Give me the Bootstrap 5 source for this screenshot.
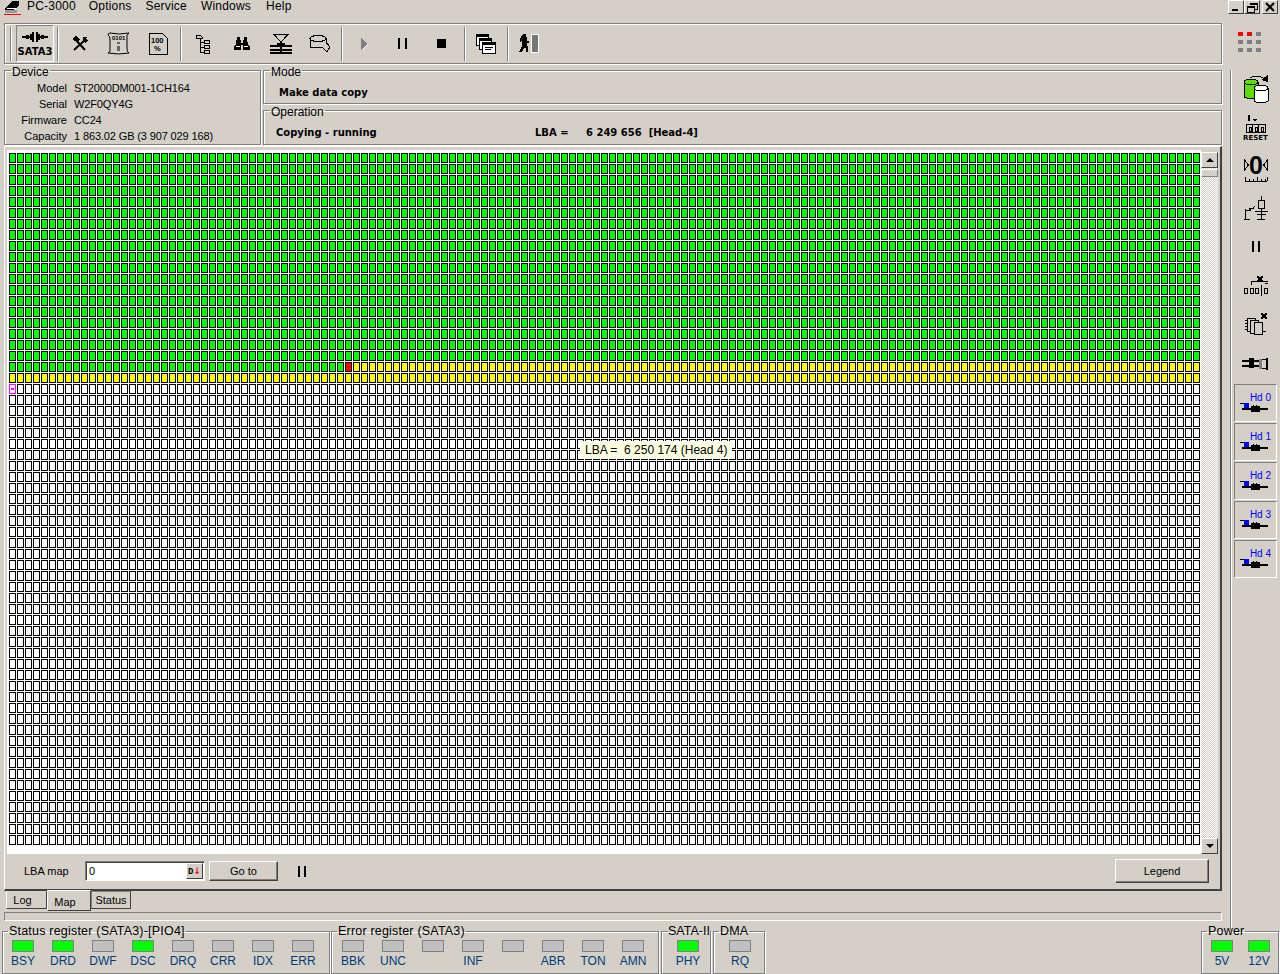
<!DOCTYPE html>
<html lang="en">
<head>
  <meta charset="UTF-8">
  <title>PC-3000</title>
  <link href="https://cdn.jsdelivr.net/npm/bootstrap@5.3.0/dist/css/bootstrap.min.css" rel="stylesheet">
  <style>
    body { background: #d4d0c8; color: #000; font: 11px/14px "Liberation Sans", Arial, sans-serif; overflow: hidden; }
    .pc-app { width: 1280px; height: 974px; overflow: hidden; }
    .pc-etched { border: 1px solid #808080; box-shadow: 1px 1px 0 #fff, inset 1px 1px 0 #fff; }

    .pc-menubar { height: 23px; font-size: 12px; letter-spacing: .2px; }
    .pc-logo { width: 17px; margin: 0 6px 0 4px; height: 15px; border-bottom: 1px solid #f00; }
    .pc-menu { margin-right: 14px; line-height: 13px; }
    .pc-winbtn { width: 16px; height: 14px; background: #d4d0c8; border: 1px solid; border-color: #fff #404040 #404040 #fff; }

    .pc-work { height: 907px; }
    .pc-left { width: 1218px; margin-left: 4px; }
    .pc-toolbar { height: 41px; padding-left: 5px; }
    .pc-tbsep { width: 2px; height: 34px; background: #808080; border-right: 1px solid #fff; margin: 0 1px 0 3px; flex: none; }
    .pc-tbsep.first { margin: 0 4px 0 0; }
    .pc-tbbtn { width: 39px; height: 37px; flex: none; }
    .pc-tbbtn.active { width: 38px; border: 1px solid; border-color: #808080 #fff #fff #808080; font: bold 10px/10px "DejaVu Sans", sans-serif; }
    .pc-ico { shape-rendering: crispEdges; display: block; }
    .pc-ico text { font-family: "Liberation Sans", sans-serif; shape-rendering: auto; }

    fieldset.pc-group { border: 1px solid #808080; box-shadow: 1px 1px 0 #fff, inset 1px 1px 0 #fff; min-width: 0; }
    fieldset.pc-group legend { font-size: 12px; line-height: 12px; margin: 0 0 0 6px; padding: 4px 1px 0; white-space: nowrap; }
    .pc-inforow { margin-top: -2px; gap: 2px; }
    .pc-device { width: 257px; height: 83px; }
    .pc-devrow { height: 16px; line-height: 16px; }
    .pc-devrow span:first-child { width: 63px; text-align: right; margin-right: 7px; margin-left: -1px; }
    .pc-devrow span:last-child { letter-spacing: -.13px; }
    .pc-mode { height: 42px; }
    .pc-oper { height: 43px; margin-top: -2px; }
    .pc-strong { font: bold 10px/16px "DejaVu Sans", sans-serif; padding-top: 7px; }

    .pc-panel { height: 745px; margin-top: 1px; border: 1px solid; border-color: #fff #404040 #404040 #fff; border-width: 1px 2px 2px 1px; padding: 3px 0 0 2px; }
    .pc-mapwhite { width: 1194px; height: 704px; background: #fff; padding: 3px 0 0 2px; position: relative; }
    .pc-cells { display: grid; grid-template-columns: repeat(149, 8px); grid-auto-rows: 11px; }
    .pc-cell { border: 1px solid #000; background: #fff; margin: 0 1px 1px 0; }
    .pc-cell.g { background: #0f0; }
    .pc-cell.y { background: #ff0; }
    .pc-cell.r { background: #f00; }
    .pc-cell.m { border-color: #f0f; background: linear-gradient(#f0f, #f0f) center / 3px 2px no-repeat, #fff; }
    .pc-tip { position: absolute; left: 574px; top: 292px; width: 150px; height: 16px; background: #ffffe1; outline: 1px solid #fff; font-size: 12px; line-height: 16px; padding-left: 4px; white-space: nowrap; }
    .pc-scroll { width: 17px; height: 702px; margin-top: 2px; background: repeating-conic-gradient(#fff 0 25%, #d4d0c8 0 50%) 0 0 / 2px 2px; }
    .pc-sbtn { height: 16px; background: #d4d0c8; border: 1px solid; border-color: #fff #404040 #404040 #fff; }
    .pc-sthumb { height: 8px; background: #d4d0c8; border: 1px solid; border-color: #fff #808080 #808080 #fff; margin-top: 1px; }
    .pc-arrow-up { width: 0; height: 0; border: 4px solid transparent; border-top: 0; border-bottom: 4px solid #000; }
    .pc-arrow-dn { width: 0; height: 0; border: 4px solid transparent; border-bottom: 0; border-top: 4px solid #000; }
    .pc-controls { height: 34px; }
    .pc-lbalabel { width: 78px; padding-left: 17px; }
    .pc-lbainput { width: 120px; height: 20px; background: #fff; border: 1px solid; border-color: #808080 #fff #fff #808080; box-shadow: inset 1px 1px 0 #404040; padding-left: 3px; line-height: 18px; }
    .pc-dbtn { width: 17px; height: 16px; margin: 1px 1px 0 0; background: #d4d0c8; font: bold 9px/14px "Liberation Mono", monospace; border: 1px solid; border-color: #fff #404040 #404040 #fff; }
    .pc-dbtn i { color: #f00; font-style: normal; font-family: "DejaVu Sans", sans-serif; }
    .pc-btn { background: #d4d0c8; border: 1px solid; border-color: #fff #404040 #404040 #fff; box-shadow: inset -1px -1px 0 #808080; text-align: center; }
    .pc-goto { width: 69px; height: 20px; margin-left: 4px; line-height: 18px; }
    .pc-legendbtn { width: 94px; height: 24px; margin-right: 11px; line-height: 22px; }
    .pc-pausebars { width: 8px; height: 11px; margin-left: 20px; border-left: 2px solid #000; border-right: 2px solid #000; }

    .pc-tabs { height: 21px; padding-left: 2px; }
    .pc-tab { height: 18px; border: 1px solid; border-color: transparent #404040 #404040 #fff; line-height: 16px; text-align: center; }
    .pc-tab.log { width: 41px; padding-right: 8px; }
    .pc-tab.map { width: 44px; height: 21px; border-color: #fff #404040 #404040 #fff; line-height: 22px; margin-top: -1px; background: #d4d0c8; padding-right: 8px; }
    .pc-tab.status { width: 40px; border-color: #808080 #404040 #404040 #808080; }
    .pc-thinbox { height: 9px; border: 1px solid; border-color: #808080 #fff #fff #808080; }

    .pc-side { width: 50px; margin-left: 8px; }
    .pc-dots { height: 47px; padding: 9px 0 0 8px; display: grid; grid-template-columns: repeat(3, 5px); grid-auto-rows: 4px; column-gap: 4px; row-gap: 4px; }
    .pc-dots b { background: #808080; }
    .pc-dots b.on { background: #f00; }
    .pc-sidebody { height: 860px; border-left: 1px solid #808080; box-shadow: inset 1px 0 0 #fff; padding-left: 3px; }
    .pc-sideico { width: 43px; height: 39px; }
    .pc-hd { width: 43px; height: 38px; margin-bottom: 1px; border: 1px solid; border-color: #808080 #fff #fff #808080; color: #00f; font-size: 10px; line-height: 11px; text-align: right; padding: 7px 5px 0 0; }
    .pc-hd svg { margin: 0 0 0 5px; }

    .pc-bottom { margin-top: -5px; height: 49px; padding-left: 2px; }
    .pc-bottom fieldset.pc-group { height: 49px; flex: none; }
    .pc-bottom fieldset.pc-group legend { margin-left: 5px; padding: 0 1px; font-size: 12.5px; letter-spacing: .2px; }
    .pc-leds { padding-left: 9px; margin-top: 3px; }
    .pc-led { width: 40px; flex: none; font-size: 12px; line-height: 14px; color: #003c78; }
    .pc-led i { display: block; width: 22px; height: 12px; margin-bottom: 2px; background: #c0c0c0; border: 1px solid #808080; }
    .pc-led span { width: 22px; white-space: nowrap; display: flex; justify-content: center; }
    .pc-led.on i { background: #0f0; }
    .pc-st { width: 328px; }
    .pc-er { width: 328px; margin-left: 1px; }
    .pc-er .pc-leds { padding-left: 10px; }
    .pc-sa { width: 50px; margin-left: 2px; }
    .pc-dm { width: 52px; margin-left: 2px; }
    .pc-sa .pc-leds, .pc-dm .pc-leds { padding-left: 15px; }
    .pc-bottom fieldset.pc-sa legend { margin-left: 6px; padding: 0; letter-spacing: 0; }
    .pc-pw { width: 78px; background: #d4d0c8; }
    .pc-pw .pc-led { width: 37px; }
  </style>
</head>
<body>
<div class="pc-app d-flex flex-column">

  <!-- menu bar -->
  <div class="pc-menubar d-flex">
    <div class="pc-logo">
      <svg class="pc-ico" width="16" height="14" viewBox="0 0 16 14"><path d="M1 8 9 1h6v5l-6 4H1z" fill="#000"/><path d="M1 10h12v3H1z" fill="#999"/><path d="M3 8h9v1H3z" fill="#fff"/></svg>
    </div>
    <span class="pc-menu" style="margin-right:13px">PC-3000</span>
    <span class="pc-menu">Options</span>
    <span class="pc-menu">Service</span>
    <span class="pc-menu" style="margin-right:15px">Windows</span>
    <span class="pc-menu">Help</span>
    <div class="ms-auto d-flex" style="margin-right:2px">
      <div class="pc-winbtn"><svg class="pc-ico" width="14" height="12"><path d="M3 8h6v2H3z"/></svg></div>
      <div class="pc-winbtn"><svg class="pc-ico" width="14" height="12"><path d="M5 2h7v6h-2M5 2v2M5 3h7M2 5h7v6H2zM2 6h7" fill="none" stroke="#000"/></svg></div>
      <div class="pc-winbtn" style="margin-left:2px"><svg class="pc-ico" width="14" height="12"><path d="M3 2l8 8M11 2l-8 8" stroke="#000" stroke-width="2" style="shape-rendering:auto"/></svg></div>
    </div>
  </div>

  <div class="pc-work d-flex">
    <div class="pc-left">
      <!-- toolbar -->
      <div class="pc-toolbar pc-etched d-flex align-items-center">
        <div class="pc-tbsep first"></div>
        <div class="pc-tbbtn active d-flex flex-column align-items-center justify-content-center">
          <svg class="pc-ico mb-1" width="26" height="12" viewBox="0 0 26 12"><path d="M0 5h26v2H0zM4 4h3v4H4zM19 4h3v4h-3zM10 1h2v10h-2zM14 1h2v10h-2zM8 3h10v6H8z" fill="#000"/><path d="M12 1h2v10h-2z" fill="#d4d0c8"/></svg>
          SATA3
        </div>
        <div class="pc-tbsep"></div>
        <div class="pc-tbbtn d-flex align-items-center justify-content-center">
          <svg class="pc-ico" width="18" height="16" viewBox="0 0 18 16"><path d="M3 14 14 4M4 3l10 11" stroke="#000" stroke-width="2" style="shape-rendering:auto"/><path d="M1 3 5 0l4 3-3 3zM12 1h4l-2 2 3 1-2 3-3-2z" fill="#000"/></svg>
        </div>
        <div class="pc-tbbtn d-flex align-items-center justify-content-center">
          <svg class="pc-ico" width="23" height="23" viewBox="0 0 23 23" style="shape-rendering:auto"><path d="M3 1q9 2 19 0q-3 2-2 5v11q0 3 2 4q-10 2-21 0q3-1 2-4V7q0-3-2-4q0-2 2-2z" fill="#d4d0c8" stroke="#000"/><text x="5" y="8" font-size="6" font-weight="bold">0101</text><path d="M10 10h3v2h-3zM10 14h3v5h-3z" fill="#666"/></svg>
        </div>
        <div class="pc-tbbtn d-flex align-items-center justify-content-center">
          <svg class="pc-ico" width="20" height="23" viewBox="0 0 20 23"><path d="M1 1h13l5 5v16H1z" fill="#d4d0c8" stroke="#000"/><text x="3" y="11" font-size="7.500" font-weight="bold">100</text><text x="6" y="19" font-size="7.500" font-weight="bold">%</text></svg>
        </div>
        <div class="pc-tbsep"></div>
        <div class="pc-tbbtn d-flex align-items-center justify-content-center">
          <svg class="pc-ico" width="16" height="20" viewBox="0 0 16 20"><path d="M1 1h4l2 2v1H1z" fill="#d4d0c8" stroke="#000"/><path d="M5 4v14h4M5 8h4M5 13h4" fill="none" stroke="#000"/><path d="M9.500 6.500h5v3h-5zM9.500 11.500h5v3h-5zM9.500 16.500h5v3h-5z" fill="#d4d0c8" stroke="#000"/></svg>
        </div>
        <div class="pc-tbbtn d-flex align-items-center justify-content-center">
          <svg class="pc-ico" width="16" height="13" viewBox="0 0 16 13"><path d="M3 0h3v3h1v3h2V3h1V0h3v3l1 4 2 3v3H9V8H7v5H0v-3l2-3z" fill="#000"/><path d="M2 9h4v1H2zM10 9h4v1h-4z" fill="#fff"/></svg>
        </div>
        <div class="pc-tbbtn d-flex align-items-center justify-content-center">
          <svg class="pc-ico" width="22" height="21" viewBox="0 0 22 21"><path d="M4 1.500h14L11 9z" fill="none" stroke="#000"/><path d="M0 12h22v2H0zM0 16h22v2H0zM0 19h22v2H0zM10 9h2v12h-2zM7 10h8v2H7z" fill="#000"/></svg>
        </div>
        <div class="pc-tbbtn d-flex align-items-center justify-content-center">
          <svg class="pc-ico" width="22" height="18" viewBox="0 0 22 18"><path d="M1 3v9h12l5 5 3-5-3-4h-1V3" fill="#d4d0c8" stroke="#000"/><ellipse cx="9" cy="3.500" rx="8" ry="3" fill="#d4d0c8" stroke="#000"/></svg>
        </div>
        <div class="pc-tbsep" style="margin-left:2px"></div>
        <div class="pc-tbbtn d-flex align-items-center justify-content-center">
          <svg class="pc-ico" width="8" height="12" viewBox="0 0 8 12"><path d="M1 0l6 6-6 6z" fill="#808080"/><path d="M7 6l-6 6h2l5-6z" fill="#fff"/></svg>
        </div>
        <div class="pc-tbbtn d-flex align-items-center justify-content-center">
          <svg class="pc-ico" width="9" height="11"><path d="M0 0h2v11H0zM7 0h2v11H7z"/></svg>
        </div>
        <div class="pc-tbbtn d-flex align-items-center justify-content-center">
          <svg class="pc-ico" width="9" height="9"><path d="M0 0h9v9H0z"/></svg>
        </div>
        <div class="pc-tbsep" style="margin-right:0"></div>
        <div class="pc-tbbtn d-flex align-items-center justify-content-center">
          <svg class="pc-ico" width="20" height="20" viewBox="0 0 20 20"><g fill="#fff" stroke="#000"><path d="M.5.500h12v11H.5z"/><path d="M3.500 4.500h12v11h-12z"/><path d="M6.500 8.500h13v11h-13z"/></g><path d="M0 0h13v3H0zM3 4h13v3H3zM6 8h14v3H6zM9 13h8v1H9zM9 15h6v1H9z" fill="#000"/></svg>
        </div>
        <div class="pc-tbsep" style="margin:0 0 0 2px"></div>
        <div class="pc-tbbtn d-flex align-items-center justify-content-center">
          <svg class="pc-ico" width="20" height="19" viewBox="0 0 20 19"><path d="M4 0h3v3h1v4h2v2H8v3l1 1v5H7v-4H5l-2 4H0l3-6V6l-2 2V5z" fill="#000"/><path d="M12.500.500h7v18h-7z" fill="#777" stroke="#fff"/></svg>
        </div>
      </div>

      <!-- device info -->
      <div class="pc-inforow d-flex">
        <fieldset class="pc-group pc-device flex-none">
          <legend class="float-none w-auto">Device</legend>
          <div style="padding-top:2px">
            <div class="pc-devrow d-flex"><span>Model</span><span>ST2000DM001-1CH164</span></div>
            <div class="pc-devrow d-flex"><span>Serial</span><span>W2F0QY4G</span></div>
            <div class="pc-devrow d-flex"><span>Firmware</span><span>CC24</span></div>
            <div class="pc-devrow d-flex"><span>Capacity</span><span>1 863.02 GB (3 907 029 168)</span></div>
          </div>
        </fieldset>
        <div class="flex-grow-1">
          <fieldset class="pc-group pc-mode">
            <legend class="float-none w-auto">Mode</legend>
            <div class="pc-strong" style="padding-left:15px">Make data copy</div>
          </fieldset>
          <fieldset class="pc-group pc-oper">
            <legend class="float-none w-auto">Operation</legend>
            <div class="pc-strong d-flex" style="padding-left:12px"><span style="width:259px">Copying - running</span><span style="width:51px">LBA =</span><span>6 249 656&nbsp; [Head-4]</span></div>
          </fieldset>
        </div>
      </div>

      <!-- map -->
      <div class="pc-panel">
        <div class="d-flex">
          <div class="pc-mapwhite">
            <div class="pc-cells" id="cells"></div>
            <div class="pc-tip">LBA =&nbsp; 6 250 174 (Head 4)</div>
          </div>
          <div class="pc-scroll d-flex flex-column">
            <div class="pc-sbtn d-flex align-items-center justify-content-center"><div class="pc-arrow-up"></div></div>
            <div class="pc-sthumb"></div>
            <div class="pc-sbtn d-flex align-items-center justify-content-center mt-auto"><div class="pc-arrow-dn"></div></div>
          </div>
        </div>
        <div class="pc-controls d-flex align-items-center">
          <div class="pc-lbalabel">LBA map</div>
          <div class="pc-lbainput d-flex justify-content-between">0<div class="pc-dbtn text-center">D<i>&#8595;</i></div></div>
          <div class="pc-btn pc-goto">Go to</div>
          <div class="pc-pausebars"></div>
          <div class="pc-btn pc-legendbtn ms-auto">Legend</div>
        </div>
      </div>

      <div class="pc-tabs d-flex">
        <div class="pc-tab log">Log</div>
        <div class="pc-tab map">Map</div>
        <div class="pc-tab status">Status</div>
      </div>
      <div class="pc-thinbox"></div>
    </div>

    <!-- right side -->
    <div class="pc-side">
      <div class="pc-dots"><b class="on"></b><b class="on"></b><b></b><b></b><b></b><b></b><b></b><b></b><b></b></div>
      <div class="pc-sidebody">
        <div class="pc-sideico d-flex align-items-center justify-content-center" style="height:40px">
          <svg class="pc-ico" width="26" height="30" viewBox="0 0 26 30"><path d="M1 7v15q7 3 14 0V7z" fill="#5fdc00" stroke="#000"/><ellipse cx="8" cy="7" rx="7" ry="3" fill="#5fdc00" stroke="#000"/><path d="M11 13v13q7 4 14 0V13z" fill="#fff" stroke="#000"/><ellipse cx="18" cy="13" rx="7" ry="3" fill="#fff" stroke="#000"/><path d="M7 3q6-4 13 0" fill="none" stroke="#000"/><path d="M18 5l7-5v7z" fill="#000"/></svg>
        </div>
        <div class="pc-sideico d-flex flex-column align-items-center justify-content-center" style="height:36px">
          <svg class="pc-ico" width="20" height="21" viewBox="0 0 20 21"><path d="M8 0v7M6 5h5l-2 3zM2 1h2v6H2z" fill="#000"/><path d="M.5 10.500h19v8H.5z" fill="none" stroke="#000"/><path d="M6.500 10v9M12.500 10v9M3 13h2v4H3zM9 13h2v4H9zM15 13h2v4h-2z" stroke="#000" fill="none"/></svg>
          <span style="font:bold 7px/7px 'DejaVu Sans',sans-serif">RESET</span>
        </div>
        <div class="pc-sideico d-flex align-items-center justify-content-center" style="height:42px">
          <svg class="pc-ico" width="24" height="34" viewBox="0 0 24 34"><text x="12" y="24" text-anchor="middle" font-size="25" font-weight="bold">0</text><path d="M.5 10l4 5-4 5zM23.500 10l-4 5 4 5z" fill="none" stroke="#000"/><path d="M1 31h22M1 27v4M5 29v2M9 29v2M13 27v4M17 29v2M21 29v2M23 27v4" stroke="#000" fill="none"/></svg>
        </div>
        <div class="pc-sideico d-flex align-items-center justify-content-center">
          <svg class="pc-ico" width="24" height="24" viewBox="0 0 24 24"><path d="M17 0v4M17 12v2M11 15h13M13 18h9M17 14v10M13 23h8M14 4.500h6v8h-6z" fill="none" stroke="#000"/><path d="M5 13h2v1H5zM1 13h1v10H1zM0 23h6v1H0zM2 14h3v-2h4v-1h1v-1h1v1h-1v2H7v2H2z" fill="#000"/></svg>
        </div>
        <div class="pc-sideico d-flex align-items-center justify-content-center">
          <svg class="pc-ico" width="8" height="11"><path d="M0 0h2v11H0zM6 0h2v11H6z"/></svg>
        </div>
        <div class="pc-sideico d-flex align-items-center justify-content-center">
          <svg class="pc-ico" width="24" height="20" viewBox="0 0 24 20"><path d="M7 9V5h17v2M.5 12.500h3v5h-3zM6.500 12.500h3v5h-3zM11.500 12.500h3v5h-3zM20.500 12.500h3v5h-3zM17 9v11M21 7h3" fill="none" stroke="#000"/><path d="M13 0h2v1h2V0h2v2h-1v2h1v2h-2V5h-2v1h-2V4h1V2h-1z" fill="#000"/></svg>
        </div>
        <div class="pc-sideico d-flex align-items-center justify-content-center">
          <svg class="pc-ico" width="22" height="24" viewBox="0 0 22 24"><g fill="#d4d0c8" stroke="#000"><path d="M2.500 5.500h8v13h-8z"/><path d="M5.500 7.500h8v13h-8z"/><path d="M9.500 9.500h8v12h-8z"/></g><path d="M17 18h4v1h-4zM0 7h2v1H0zM0 10h2v1H0zM0 13h2v1H0zM0 16h2v1H0zM16 0h2v1h2V0h2v2h-1v2h1v2h-2V5h-2v1h-2V4h1V2h-1z" fill="#000"/></svg>
        </div>
        <div class="pc-sideico d-flex align-items-center justify-content-center" style="margin-bottom:1px">
          <svg class="pc-ico" width="28" height="14" viewBox="0 0 28 14"><path d="M0 3h17v2H0zM0 8h17v2H0zM7 1h5v10H7zM24 1h2v12h-2zM19 2h6v1h-6zM19 11h6v1h-6z" fill="#000"/><path d="M17 2h3v10h-3z" fill="#808080"/></svg>
        </div>
        <div class="pc-hd">Hd 0<svg class="pc-ico" width="30" height="10" viewBox="0 0 30 10"><use href="#hdarm"/></svg></div>
        <div class="pc-hd">Hd 1<svg class="pc-ico" width="30" height="10" viewBox="0 0 30 10"><use href="#hdarm"/></svg></div>
        <div class="pc-hd">Hd 2<svg class="pc-ico" width="30" height="10" viewBox="0 0 30 10"><use href="#hdarm"/></svg></div>
        <div class="pc-hd">Hd 3<svg class="pc-ico" width="30" height="10" viewBox="0 0 30 10"><use href="#hdarm"/></svg></div>
        <div class="pc-hd">Hd 4<svg class="pc-ico" width="30" height="10" viewBox="0 0 30 10"><use href="#hdarm"/></svg></div>
      </div>
    </div>
  </div>

  <!-- registers -->
  <div class="pc-bottom d-flex">
    <fieldset class="pc-group pc-st">
      <legend class="float-none w-auto">Status register (SATA3)-[PIO4]</legend>
      <div class="pc-leds d-flex">
        <div class="pc-led on"><i></i><span>BSY</span></div>
        <div class="pc-led on"><i></i><span>DRD</span></div>
        <div class="pc-led"><i></i><span>DWF</span></div>
        <div class="pc-led on"><i></i><span>DSC</span></div>
        <div class="pc-led"><i></i><span>DRQ</span></div>
        <div class="pc-led"><i></i><span>CRR</span></div>
        <div class="pc-led"><i></i><span>IDX</span></div>
        <div class="pc-led"><i></i><span>ERR</span></div>
      </div>
    </fieldset>
    <fieldset class="pc-group pc-er">
      <legend class="float-none w-auto">Error register (SATA3)</legend>
      <div class="pc-leds d-flex">
        <div class="pc-led"><i></i><span>BBK</span></div>
        <div class="pc-led"><i></i><span>UNC</span></div>
        <div class="pc-led"><i></i><span></span></div>
        <div class="pc-led"><i></i><span>INF</span></div>
        <div class="pc-led"><i></i><span></span></div>
        <div class="pc-led"><i></i><span>ABR</span></div>
        <div class="pc-led"><i></i><span>TON</span></div>
        <div class="pc-led"><i></i><span>AMN</span></div>
      </div>
    </fieldset>
    <fieldset class="pc-group pc-sa">
      <legend class="float-none w-auto">SATA-II</legend>
      <div class="pc-leds d-flex"><div class="pc-led on"><i></i><span>PHY</span></div></div>
    </fieldset>
    <fieldset class="pc-group pc-dm">
      <legend class="float-none w-auto">DMA</legend>
      <div class="pc-leds d-flex"><div class="pc-led"><i></i><span>RQ</span></div></div>
    </fieldset>
    <fieldset class="pc-group pc-pw ms-auto" style="margin-right:1px">
      <legend class="float-none w-auto">Power</legend>
      <div class="pc-leds d-flex">
        <div class="pc-led on"><i></i><span>5V</span></div>
        <div class="pc-led on"><i></i><span>12V</span></div>
      </div>
    </fieldset>
  </div>
</div>

<svg width="0" height="0" class="position-absolute">
  <defs>
    <g id="hdarm">
      <path d="M0 0h8v1H0zM2 5h26v2H2zM11 3h9v6h-9zM13 2h1v1h-1zM16 2h1v1h-1z" fill="#000"/>
      <path d="M4 0h5v5H4z" fill="#00f"/>
    </g>
  </defs>
</svg>

<script>
  // sector map: 149 x 63 blocks
  const COLS = 149, ROWS = 63;
  const grid = document.getElementById('cells');
  const frag = document.createDocumentFragment();
  for (let r = 0; r < ROWS; r++) {
    for (let c = 0; c < COLS; c++) {
      const d = document.createElement('div');
      let cls = 'pc-cell';
      if (r < 19) cls += ' g';
      else if (r === 19) cls += c < 42 ? ' g' : c === 42 ? ' r' : ' y';
      else if (r === 20) cls += ' y';
      else if (r === 21 && c === 0) cls += ' m';
      d.className = cls;
      frag.appendChild(d);
    }
  }
  grid.appendChild(frag);
</script>
<script src="https://cdn.jsdelivr.net/npm/bootstrap@5.3.0/dist/js/bootstrap.bundle.min.js"></script>
</body>
</html>
